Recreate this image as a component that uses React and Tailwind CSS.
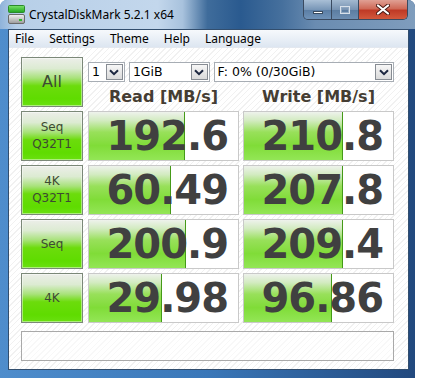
import React from "react";

const rows = [
  { label: ["Seq", "Q32T1"], read: "192.6", readBar: 96, write: "210.8", writeBar: 99 },
  { label: ["4K", "Q32T1"], read: "60.49", readBar: 82, write: "207.8", writeBar: 99 },
  { label: ["Seq"], read: "200.9", readBar: 97, write: "209.4", writeBar: 99 },
  { label: ["4K"], read: "29.98", readBar: 73, write: "96.86", writeBar: 88 },
];

const greenBtn =
  "flex h-[50px] w-[62px] flex-col items-center justify-center border border-[#7b8878] bg-[linear-gradient(to_bottom,#eceee9_0%,#dcebd2_22%,#a8e27a_42%,#6cdc0c_58%,#5fdc00_85%,#6ae010_100%)] shadow-[inset_0_0_0_1px_rgba(255,255,255,0.45)] text-[#3d4a33] [font-family:'DejaVu_Sans',sans-serif]";

function Chevron() {
  return (
    <svg width="10" height="7" viewBox="0 0 10 7">
      <path d="M1 1.2 L5 5.2 L9 1.2" fill="none" stroke="#1d2740" strokeWidth="2" />
    </svg>
  );
}

function Select({ className, text }) {
  return (
    <div className={"flex h-[20px] items-center border border-[#a7adb4] bg-white " + className}>
      <span className="pl-[3px] text-[12.5px] leading-none text-black [font-family:'DejaVu_Sans',sans-serif]">{text}</span>
      <div className="ml-auto mr-px flex h-[16px] w-[17px] items-center justify-center border border-[#878c93] bg-[linear-gradient(to_bottom,#f7f7f7,#dadada)]">
        <Chevron />
      </div>
    </div>
  );
}

function Value({ text, bar }) {
  return (
    <div className="relative h-[50px] w-[151px] border border-[#c9c9c9] bg-white">
      <div
        className="absolute bottom-0 left-0 top-0 border-r border-[#459a18] bg-[linear-gradient(to_bottom,#eef2ec_0%,#d2ebc0_18%,#98e05a_42%,#80dc38_70%,#93e656_100%)]"
        style={{ width: bar }}
      />
      <div className="relative flex h-full items-center justify-end pr-[10px] text-[40px] font-bold leading-none tracking-[-1px] text-[#404040] [font-family:'DejaVu_Sans',sans-serif]">
        {text}
      </div>
    </div>
  );
}

function DiskIcon() {
  return (
    <svg width="17" height="19" viewBox="0 0 17 19">
      <defs>
        <linearGradient id="g1" x1="0" y1="0" x2="0" y2="1">
          <stop offset="0" stopColor="#7be36a" />
          <stop offset="1" stopColor="#1fa51f" />
        </linearGradient>
        <linearGradient id="g2" x1="0" y1="0" x2="0" y2="1">
          <stop offset="0" stopColor="#f4f4f4" />
          <stop offset="1" stopColor="#9a9a9a" />
        </linearGradient>
      </defs>
      <rect x="0.5" y="0.5" width="16" height="7" rx="1" fill="url(#g1)" stroke="#2b8a2b" />
      <rect x="0.5" y="9.5" width="16" height="9" rx="1.5" fill="url(#g2)" stroke="#6b6b6b" />
      <rect x="11" y="14" width="3" height="2" fill="#2fb82f" />
    </svg>
  );
}

function CloseX() {
  return (
    <svg width="14" height="11" viewBox="0 0 14 11">
      <path d="M2 1.5 L12 9.5 M12 1.5 L2 9.5" stroke="#4a1a14" strokeWidth="4" strokeLinecap="round" />
      <path d="M2 1.5 L12 9.5 M12 1.5 L2 9.5" stroke="#ffffff" strokeWidth="2.2" strokeLinecap="round" />
    </svg>
  );
}

export default function App() {
  return (
    <div className="h-[383px] w-[425px] bg-white">
      <div className="flex h-[378px] w-[415px] flex-col rounded-t-[7px] bg-[linear-gradient(90deg,#4f8dcc_0%,#3a77b8_50%,#22497e_100%)]">
        {/* title bar */}
        <div className="flex h-[29px] rounded-t-[7px] bg-[linear-gradient(90deg,#8fb3da_0%,#b7cfe8_4%,#c3d7ec_38%,#a8c2dd_44%,#3f6c9b_50%,#2a5a8f_58%,#46709d_68%,#6a8cb1_76%,#7f9dbd_100%)]">
          <div className="ml-[8px] mt-[5px]">
            <DiskIcon />
          </div>
          <div className="ml-[4px] self-center text-[12px] text-black [font-family:'Noto_Sans',sans-serif]">
            CrystalDiskMark 5.2.1 x64
          </div>
          <div className="ml-auto mr-[7px] flex h-[20px] overflow-hidden rounded-b-[5px] border border-t-0 border-[#3a4a60]">
            <div className="flex w-[28px] items-center justify-center border-r border-[#3a4a60] bg-[linear-gradient(to_bottom,#a9bfd6,#7896b7_50%,#5a7da4_51%,#6f92b8)]">
              <div className="mt-[5px] h-[3px] w-[10px] border border-[#394a5e] bg-white" />
            </div>
            <div className="flex w-[27px] items-center justify-center border-r border-[#3a4a60] bg-[linear-gradient(to_bottom,#a3b9d0,#7893b2_50%,#5b7ca0_51%,#6d8eb2)]">
              <div className="h-[8px] w-[10px] border border-[#d7e0ea] shadow-[inset_0_0_0_1px_#8ea6c0]" />
            </div>
            <div className="flex w-[48px] items-center justify-center bg-[linear-gradient(to_bottom,#e0a094,#cf6a58_45%,#bf3a26_55%,#d2583c)]">
              <CloseX />
            </div>
          </div>
        </div>

        {/* client */}
        <div className="ml-[8px] flex h-[341px] w-[401px] flex-col border border-[#324e6e] bg-[repeating-linear-gradient(135deg,#ffffff_0px,#ffffff_3px,#f1f1f1_3px,#f1f1f1_4px)]">
          <div className="flex h-[18px] items-center gap-[15px] border-b border-[#e3e8ef] bg-[linear-gradient(to_bottom,#f6f9fc,#dde6f1)] pl-[6px] text-[12px] text-black [font-family:'Noto_Sans',sans-serif]">
            <span>File</span>
            <span>Settings</span>
            <span>Theme</span>
            <span>Help</span>
            <span>Language</span>
          </div>

          <div className="pl-[12px] pt-[9px]">
            <div className="grid grid-cols-[63px_151px_151px] gap-x-[4px] gap-y-[4px]">
              <div className={greenBtn}>
                <span className="text-[16px] leading-none">All</span>
              </div>
              <div className="col-span-2 flex flex-col">
                <div className="mt-[5px] flex gap-[4px]">
                  <Select className="w-[37px]" text="1" />
                  <Select className="w-[81px]" text="1GiB" />
                  <Select className="w-[181px]" text="F: 0% (0/30GiB)" />
                </div>
                <div className="mt-[5px] grid grid-cols-[151px_151px] gap-x-[4px] text-[16px] font-bold leading-[19px] text-[#453d33] [font-family:'DejaVu_Sans',sans-serif]">
                  <div className="text-center">Read [MB/s]</div>
                  <div className="text-center">Write [MB/s]</div>
                </div>
              </div>

              {rows.map((r, i) => (
                <React.Fragment key={i}>
                  <div className={greenBtn}>
                    {r.label.map((l) => (
                      <span key={l} className="text-[12px] leading-[17px]">
                        {l}
                      </span>
                    ))}
                  </div>
                  <Value text={r.read} bar={r.readBar} />
                  <Value text={r.write} bar={r.writeBar} />
                </React.Fragment>
              ))}
            </div>

            <div className="mt-[8px] h-[30px] w-[373px] border border-[#a9a9a9] bg-white/50" />
          </div>
        </div>
      </div>
    </div>
  );
}
